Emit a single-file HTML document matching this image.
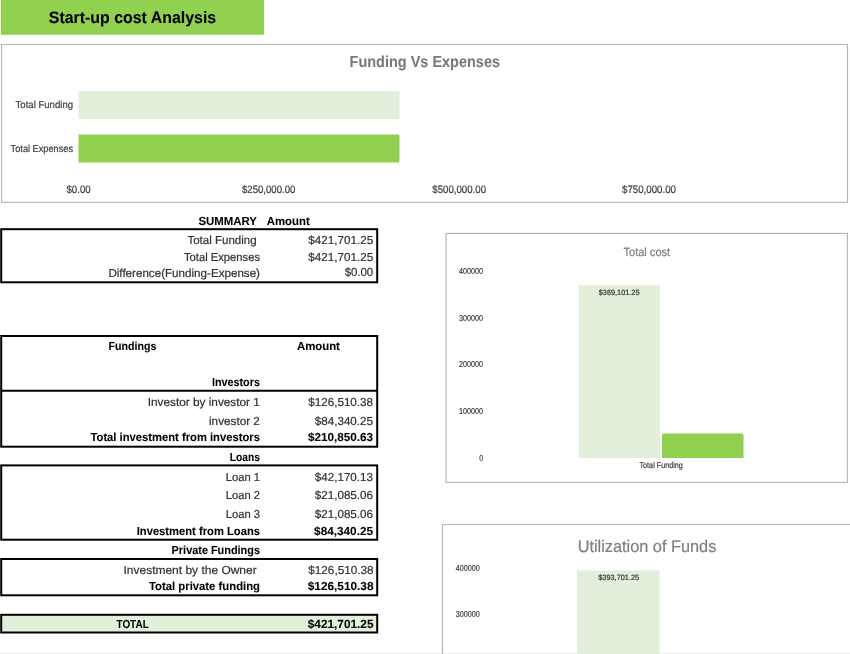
<!DOCTYPE html>
<html><head><meta charset="utf-8"><style>
html,body{margin:0;padding:0;background:#fff;overflow:hidden}
svg{display:block;font-family:"Liberation Sans",sans-serif;text-rendering:geometricPrecision;will-change:transform}
</style></head><body>
<svg width="850" height="654" viewBox="0 0 850 654">
<rect x="0" y="0" width="850" height="654" fill="#fff"/>
<rect x="1" y="0" width="263" height="34.8" fill="#92D050" stroke="none" stroke-width="0" rx="0"/>
<text x="48.80" y="23.20" font-size="16.57" font-weight="bold" fill="#000" stroke="#000" stroke-width="0.08" textLength="167.40" lengthAdjust="spacingAndGlyphs">Start-up cost Analysis</text>
<rect x="1.6" y="44.5" width="845.9" height="157.8" fill="none" stroke="#B8B8B8" stroke-width="1.2" rx="0"/>
<text x="349.60" y="66.60" font-size="15.99" font-weight="bold" fill="#7A7A7A" stroke="#7A7A7A" stroke-width="0.08" textLength="150.40" lengthAdjust="spacingAndGlyphs">Funding Vs Expenses</text>
<path d="M78.5,91 H398.0 Q399.5,91 399.5,92.5 V117.5 Q399.5,119 398.0,119 H78.5 Z" fill="#E2EFDA"/>
<path d="M78.5,134.5 H398.0 Q399.5,134.5 399.5,136.0 V161.0 Q399.5,162.5 398.0,162.5 H78.5 Z" fill="#92D050"/>
<text x="15.50" y="108.20" font-size="10.17" font-weight="normal" fill="#404040" stroke="#404040" stroke-width="0.2" textLength="57.60" lengthAdjust="spacingAndGlyphs">Total Funding</text>
<text x="10.60" y="152.00" font-size="10.17" font-weight="normal" fill="#404040" stroke="#404040" stroke-width="0.2" textLength="62.50" lengthAdjust="spacingAndGlyphs">Total Expenses</text>
<text x="66.50" y="192.50" font-size="10.76" font-weight="normal" fill="#404040" stroke="#404040" stroke-width="0.2" textLength="24.10" lengthAdjust="spacingAndGlyphs">$0.00</text>
<text x="242.00" y="192.50" font-size="10.76" font-weight="normal" fill="#404040" stroke="#404040" stroke-width="0.2" textLength="53.40" lengthAdjust="spacingAndGlyphs">$250,000.00</text>
<text x="432.30" y="192.50" font-size="10.76" font-weight="normal" fill="#404040" stroke="#404040" stroke-width="0.2" textLength="53.70" lengthAdjust="spacingAndGlyphs">$500,000.00</text>
<text x="622.00" y="192.50" font-size="10.76" font-weight="normal" fill="#404040" stroke="#404040" stroke-width="0.2" textLength="54.00" lengthAdjust="spacingAndGlyphs">$750,000.00</text>
<text x="198.40" y="225.00" font-size="11.63" font-weight="bold" fill="#000" stroke="#000" stroke-width="0.08" textLength="58.60" lengthAdjust="spacingAndGlyphs">SUMMARY</text>
<text x="266.80" y="224.80" font-size="11.63" font-weight="bold" fill="#000" stroke="#000" stroke-width="0.08" textLength="42.90" lengthAdjust="spacingAndGlyphs">Amount</text>
<rect x="1.2" y="229.2" width="376" height="53.1" fill="none" stroke="#000" stroke-width="2" rx="0"/>
<text x="187.40" y="243.80" font-size="11.63" font-weight="normal" fill="#303030" stroke="#303030" stroke-width="0.2" textLength="69.20" lengthAdjust="spacingAndGlyphs">Total Funding</text>
<text x="184.00" y="261.00" font-size="11.63" font-weight="normal" fill="#303030" stroke="#303030" stroke-width="0.2" textLength="76.00" lengthAdjust="spacingAndGlyphs">Total Expenses</text>
<text x="108.40" y="276.60" font-size="11.63" font-weight="normal" fill="#303030" stroke="#303030" stroke-width="0.2" textLength="151.60" lengthAdjust="spacingAndGlyphs">Difference(Funding-Expense)</text>
<text x="308.30" y="243.90" font-size="11.63" font-weight="normal" fill="#303030" stroke="#303030" stroke-width="0.2" textLength="64.90" lengthAdjust="spacingAndGlyphs">$421,701.25</text>
<text x="308.30" y="260.80" font-size="11.63" font-weight="normal" fill="#303030" stroke="#303030" stroke-width="0.2" textLength="64.90" lengthAdjust="spacingAndGlyphs">$421,701.25</text>
<text x="344.70" y="276.40" font-size="11.63" font-weight="normal" fill="#303030" stroke="#303030" stroke-width="0.2" textLength="28.50" lengthAdjust="spacingAndGlyphs">$0.00</text>
<rect x="1.2" y="336" width="376" height="110.7" fill="none" stroke="#000" stroke-width="2" rx="0"/>
<line x1="1.2" y1="390.8" x2="377.2" y2="390.8" stroke="#000" stroke-width="2"/>
<text x="108.60" y="350.10" font-size="11.63" font-weight="bold" fill="#000" stroke="#000" stroke-width="0.08" textLength="47.80" lengthAdjust="spacingAndGlyphs">Fundings</text>
<text x="297.00" y="350.10" font-size="11.63" font-weight="bold" fill="#000" stroke="#000" stroke-width="0.08" textLength="42.90" lengthAdjust="spacingAndGlyphs">Amount</text>
<text x="211.90" y="385.90" font-size="11.63" font-weight="bold" fill="#000" stroke="#000" stroke-width="0.08" textLength="48.00" lengthAdjust="spacingAndGlyphs">Investors</text>
<text x="147.70" y="406.00" font-size="11.63" font-weight="normal" fill="#303030" stroke="#303030" stroke-width="0.2" textLength="112.20" lengthAdjust="spacingAndGlyphs">Investor by investor 1</text>
<text x="209.00" y="424.50" font-size="11.63" font-weight="normal" fill="#303030" stroke="#303030" stroke-width="0.2" textLength="50.90" lengthAdjust="spacingAndGlyphs">investor 2</text>
<text x="90.50" y="441.30" font-size="11.63" font-weight="bold" fill="#000" stroke="#000" stroke-width="0.08" textLength="169.40" lengthAdjust="spacingAndGlyphs">Total investment from investors</text>
<text x="308.30" y="406.00" font-size="11.63" font-weight="normal" fill="#303030" stroke="#303030" stroke-width="0.2" textLength="64.70" lengthAdjust="spacingAndGlyphs">$126,510.38</text>
<text x="314.80" y="424.50" font-size="11.63" font-weight="normal" fill="#303030" stroke="#303030" stroke-width="0.2" textLength="58.20" lengthAdjust="spacingAndGlyphs">$84,340.25</text>
<text x="307.90" y="441.30" font-size="11.63" font-weight="bold" fill="#000" stroke="#000" stroke-width="0.08" textLength="65.10" lengthAdjust="spacingAndGlyphs">$210,850.63</text>
<text x="229.80" y="461.30" font-size="11.63" font-weight="bold" fill="#000" stroke="#000" stroke-width="0.08" textLength="30.20" lengthAdjust="spacingAndGlyphs">Loans</text>
<rect x="1.2" y="465.4" width="376" height="74.3" fill="none" stroke="#000" stroke-width="2" rx="0"/>
<text x="225.80" y="480.60" font-size="11.63" font-weight="normal" fill="#303030" stroke="#303030" stroke-width="0.2" textLength="34.20" lengthAdjust="spacingAndGlyphs">Loan 1</text>
<text x="225.80" y="499.20" font-size="11.63" font-weight="normal" fill="#303030" stroke="#303030" stroke-width="0.2" textLength="34.20" lengthAdjust="spacingAndGlyphs">Loan 2</text>
<text x="225.80" y="517.80" font-size="11.63" font-weight="normal" fill="#303030" stroke="#303030" stroke-width="0.2" textLength="34.20" lengthAdjust="spacingAndGlyphs">Loan 3</text>
<text x="136.70" y="534.50" font-size="11.63" font-weight="bold" fill="#000" stroke="#000" stroke-width="0.08" textLength="123.30" lengthAdjust="spacingAndGlyphs">Investment from Loans</text>
<text x="314.80" y="480.60" font-size="11.63" font-weight="normal" fill="#303030" stroke="#303030" stroke-width="0.2" textLength="58.20" lengthAdjust="spacingAndGlyphs">$42,170.13</text>
<text x="314.80" y="499.20" font-size="11.63" font-weight="normal" fill="#303030" stroke="#303030" stroke-width="0.2" textLength="58.20" lengthAdjust="spacingAndGlyphs">$21,085.06</text>
<text x="314.80" y="517.80" font-size="11.63" font-weight="normal" fill="#303030" stroke="#303030" stroke-width="0.2" textLength="58.20" lengthAdjust="spacingAndGlyphs">$21,085.06</text>
<text x="314.10" y="534.50" font-size="11.63" font-weight="bold" fill="#000" stroke="#000" stroke-width="0.08" textLength="58.90" lengthAdjust="spacingAndGlyphs">$84,340.25</text>
<text x="171.60" y="553.80" font-size="11.63" font-weight="bold" fill="#000" stroke="#000" stroke-width="0.08" textLength="88.40" lengthAdjust="spacingAndGlyphs">Private Fundings</text>
<rect x="1.2" y="559" width="376" height="36.3" fill="none" stroke="#000" stroke-width="2" rx="0"/>
<text x="123.50" y="573.60" font-size="11.63" font-weight="normal" fill="#303030" stroke="#303030" stroke-width="0.2" textLength="133.20" lengthAdjust="spacingAndGlyphs">Investment by the Owner</text>
<text x="149.00" y="589.90" font-size="11.63" font-weight="bold" fill="#000" stroke="#000" stroke-width="0.08" textLength="111.00" lengthAdjust="spacingAndGlyphs">Total private funding</text>
<text x="308.30" y="573.80" font-size="11.63" font-weight="normal" fill="#303030" stroke="#303030" stroke-width="0.2" textLength="65.20" lengthAdjust="spacingAndGlyphs">$126,510.38</text>
<text x="307.80" y="589.70" font-size="11.63" font-weight="bold" fill="#000" stroke="#000" stroke-width="0.08" textLength="65.70" lengthAdjust="spacingAndGlyphs">$126,510.38</text>
<rect x="1.2" y="614.8" width="376" height="17.7" fill="#E2EFDA" stroke="#000" stroke-width="2" rx="0"/>
<text x="116.50" y="627.90" font-size="11.63" font-weight="bold" fill="#000" stroke="#000" stroke-width="0.08" textLength="32.20" lengthAdjust="spacingAndGlyphs">TOTAL</text>
<text x="307.80" y="627.90" font-size="11.92" font-weight="bold" fill="#000" stroke="#000" stroke-width="0.08" textLength="65.70" lengthAdjust="spacingAndGlyphs">$421,701.25</text>
<line x1="0" y1="653.5" x2="850" y2="653.5" stroke="#EEEEEE" stroke-width="1"/>
<rect x="446.1" y="233.4" width="401.3" height="249" fill="none" stroke="#B8B8B8" stroke-width="1.2" rx="0"/>
<text x="623.50" y="255.90" font-size="12.06" font-weight="normal" fill="#7F7F7F" stroke="#7F7F7F" stroke-width="0.2" textLength="46.60" lengthAdjust="spacingAndGlyphs">Total cost</text>
<text x="459.00" y="273.80" font-size="8.58" font-weight="normal" fill="#404040" stroke="#404040" stroke-width="0.2" textLength="24.10" lengthAdjust="spacingAndGlyphs">400000</text>
<text x="459.00" y="320.50" font-size="8.58" font-weight="normal" fill="#404040" stroke="#404040" stroke-width="0.2" textLength="24.10" lengthAdjust="spacingAndGlyphs">300000</text>
<text x="459.00" y="367.20" font-size="8.58" font-weight="normal" fill="#404040" stroke="#404040" stroke-width="0.2" textLength="24.10" lengthAdjust="spacingAndGlyphs">200000</text>
<text x="459.00" y="413.90" font-size="8.58" font-weight="normal" fill="#404040" stroke="#404040" stroke-width="0.2" textLength="24.10" lengthAdjust="spacingAndGlyphs">100000</text>
<text x="479.20" y="460.60" font-size="8.58" font-weight="normal" fill="#404040" stroke="#404040" stroke-width="0.2" textLength="3.90" lengthAdjust="spacingAndGlyphs">0</text>
<rect x="578.8" y="285.3" width="81.2" height="172.7" fill="#E2EFDA" stroke="none" stroke-width="0" rx="0"/>
<path d="M661.9,458.0 V435.1 Q661.9,433.6 663.4,433.6 H742.0 Q743.5,433.6 743.5,435.1 V458.0 Z" fill="#92D050"/>
<text x="598.80" y="294.90" font-size="7.70" font-weight="normal" fill="#333" stroke="#333" stroke-width="0.2" textLength="40.70" lengthAdjust="spacingAndGlyphs">$369,101.25</text>
<text x="639.50" y="468.20" font-size="8.43" font-weight="normal" fill="#404040" stroke="#404040" stroke-width="0.2" textLength="43.30" lengthAdjust="spacingAndGlyphs">Total Funding</text>
<rect x="442.5" y="524.5" width="420" height="200" fill="none" stroke="#B8B8B8" stroke-width="1.2" rx="0"/>
<text x="577.70" y="551.60" font-size="16.86" font-weight="normal" fill="#7F7F7F" stroke="#7F7F7F" stroke-width="0.2" textLength="138.60" lengthAdjust="spacingAndGlyphs">Utilization of Funds</text>
<text x="455.70" y="570.80" font-size="8.58" font-weight="normal" fill="#404040" stroke="#404040" stroke-width="0.2" textLength="24.00" lengthAdjust="spacingAndGlyphs">400000</text>
<text x="455.70" y="617.20" font-size="8.58" font-weight="normal" fill="#404040" stroke="#404040" stroke-width="0.2" textLength="24.00" lengthAdjust="spacingAndGlyphs">300000</text>
<rect x="577" y="570.4" width="82.6" height="100" fill="#E2EFDA" stroke="none" stroke-width="0" rx="0"/>
<text x="598.20" y="580.00" font-size="7.70" font-weight="normal" fill="#333" stroke="#333" stroke-width="0.2" textLength="41.00" lengthAdjust="spacingAndGlyphs">$393,701.25</text>
</svg>
</body></html>
